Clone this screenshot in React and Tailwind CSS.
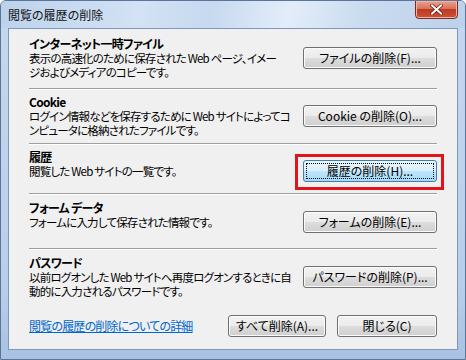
import React from 'react'

// ボタン共通スタイル (Vista 風)
const btn =
  'h-[22px] w-[134px] shrink-0 rounded-[3px] border border-[#707070] bg-[linear-gradient(to_bottom,#f2f2f2_0%,#ebebeb_50%,#dddddd_50%,#cfcfcf_100%)] shadow-[inset_0_0_0_1px_#fbfbfb] text-[12px] leading-[20px] text-black whitespace-nowrap'

const sections = [
  {
    title: 'インターネット一時ファイル',
    lines: ['表示の高速化のために保存された Web ページ、イメー', 'ジおよびメディアのコピーです。'],
    button: 'ファイルの削除(F)...',
    h: 'pt-[8px] h-[59px]',
  },
  {
    title: 'Cookie',
    lines: ['ログイン情報などを保存するために Web サイトによってコ', 'ンピュータに格納されたファイルです。'],
    button: 'Cookie の削除(O)...',
    h: 'pt-[5px] h-[53px]',
  },
  {
    title: '履歴',
    lines: ['閲覧した Web サイトの一覧です。'],
    button: '履歴の削除(H)...',
    focused: true,
    h: 'pt-[5px] h-[48px]',
  },
  {
    title: 'フォーム データ',
    lines: ['フォームに入力して保存された情報です。'],
    button: 'フォームの削除(E)...',
    h: 'pt-[6px] h-[53px]',
  },
  {
    title: 'パスワード',
    lines: ['以前ログオンした Web サイトへ再度ログオンするときに自', '動的に入力されるパスワードです。'],
    button: 'パスワードの削除(P)...',
    h: 'pt-[6px] h-[53px]',
  },
]

function Divider() {
  return (
    <div>
      <div className="h-px bg-[#a0a0a0]" />
      <div className="h-px bg-white" />
    </div>
  )
}

function Section({ s }) {
  return (
    <div className={`flex justify-between ${s.h}`}>
      <div className="w-[262px] whitespace-nowrap">
        <div className="text-[12px] leading-[14px] font-bold tracking-[-0.7px]">{s.title}</div>
        {s.lines.map((l) => (
          <div key={l} className="text-[11.5px] leading-[14px] tracking-[-0.8px]">
            {l}
          </div>
        ))}
      </div>

      <div className="relative mt-[10px] self-start shrink-0">
        {s.focused ? (
          <>
            <button className="block h-[22px] w-[134px] rounded-[3px] border border-[#3c7fb1] bg-[linear-gradient(to_bottom,#eaf6fd_0%,#d9f0fc_50%,#bee6fd_50%,#a7d9f5_100%)] text-[12px] text-black whitespace-nowrap p-[2px]">
              <span className="block h-full border border-dotted border-black leading-[14px]">
                {s.button}
              </span>
            </button>
            {/* 赤枠 */}
            <div className="absolute -left-[8px] -top-[6px] -right-[7px] -bottom-[8px] border-[3px] border-[#e0141a]" />
          </>
        ) : (
          <button className={`block ${btn}`}>{s.button}</button>
        )}
      </div>
    </div>
  )
}

export default function App() {
  return (
    <div className="w-[466px] h-[360px] overflow-hidden rounded-t-[6px] border border-[#5b7598] bg-[linear-gradient(to_bottom,#c6d8ee,#b9cee9_80%,#a9c2e2)] font-['Noto_Sans_CJK_JP',sans-serif] [font-feature-settings:'palt'] text-black">
      {/* タイトルバー */}
      <div className="h-[27px] flex items-start justify-between pl-[7px] pr-[7px] bg-[linear-gradient(100deg,#bcd2ec_0%,#d3e2f4_30%,#c6d9ef_45%,#e3edf9_62%,#c9dbef_78%,#bcd1eb_100%)]">
        <span className="mt-[6px] text-[12px] leading-[16px] text-[#111]">閲覧の履歴の削除</span>
        <div className="-mt-px w-[43px] h-[19px] rounded-b-[4px] border border-[#7a2b22] bg-[linear-gradient(to_bottom,#eba28c_0%,#d8735a_45%,#c03a22_50%,#cc5236_100%)] shadow-[inset_0_0_0_1px_#f0b5a3] flex items-center justify-center">
          <svg width="13" height="11" viewBox="0 0 13 11">
            <path d="M2 1.5 L11 9.5 M11 1.5 L2 9.5" stroke="#5a1a12" strokeWidth="3.4" strokeLinecap="square" />
            <path d="M2 1.5 L11 9.5 M11 1.5 L2 9.5" stroke="#ffffff" strokeWidth="2" strokeLinecap="square" />
          </svg>
        </div>
      </div>

      {/* クライアント領域 */}
      <div className="mx-[7px] h-[322px] border border-[#7f97b8] bg-[#f0f0f0] px-[20px] flex flex-col">
        {sections.map((s, i) => (
          <div key={s.title}>
            {i > 0 && <Divider />}
            <Section s={s} />
          </div>
        ))}

        {/* 下部 */}
        <div className="mt-auto mb-[12px] flex items-center justify-between">
          <a href="#" className="text-[12px] leading-[14px] tracking-[-0.8px] text-[#0066cc] underline whitespace-nowrap">
            閲覧の履歴の削除についての詳細
          </a>
          <div className="flex gap-[11px]">
            <button className={`${btn} !w-[98px]`}>すべて削除(A)...</button>
            <button className={`${btn} !w-[100px]`}>閉じる(C)</button>
          </div>
        </div>
      </div>
    </div>
  )
}
